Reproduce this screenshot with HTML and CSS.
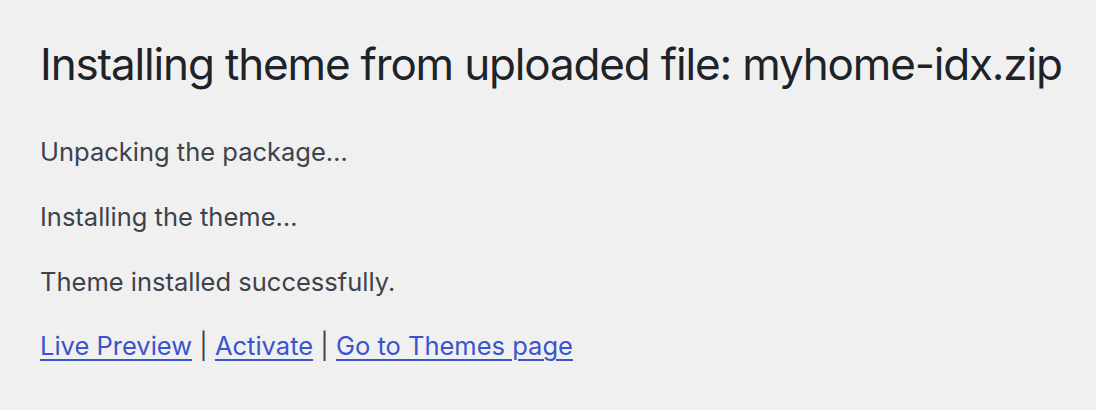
FILE: index.html
```html
<!DOCTYPE html>
<html lang="en">
<head>
<meta charset="utf-8">
<title>Install theme</title>
<link rel="stylesheet" href="styles.css">
</head>
<body>
<div class="wrap">
  <h1 class="title">Installing theme from uploaded file: myhome-idx.zip</h1>
  <p class="step">Unpacking the package…</p>
  <p class="step">Installing the theme…</p>
  <p class="step">Theme installed successfully.</p>
  <p class="step actions"><a href="#">Live Preview</a> | <a href="#">Activate</a> | <a href="#">Go to Themes page</a></p>
</div>
</body>
</html>
```
FILE: styles.css
```css
html, body {
  margin: 0;
  padding: 0;
  background: #f0f0f1;
}
body {
  font-family: Inter, "Noto Sans", sans-serif;
  color: #3c434a;
}
.wrap {
  padding: 34px 40px 0 40px;
}
.title {
  margin: 0 0 38px 0;
  font-size: 44px;
  font-weight: 400;
  line-height: 60px;
  letter-spacing: -1.16px;
  white-space: nowrap;
  color: #1d2327;
}
.step {
  margin: 0 0 26px 0;
  font-size: 25.5px;
  line-height: 39px;
}
.actions {
  margin-top: -1px;
}
.actions a {
  color: #3b54cc;
  text-decoration: underline;
  text-decoration-thickness: 2px;
  text-underline-offset: 4px;
}
```
